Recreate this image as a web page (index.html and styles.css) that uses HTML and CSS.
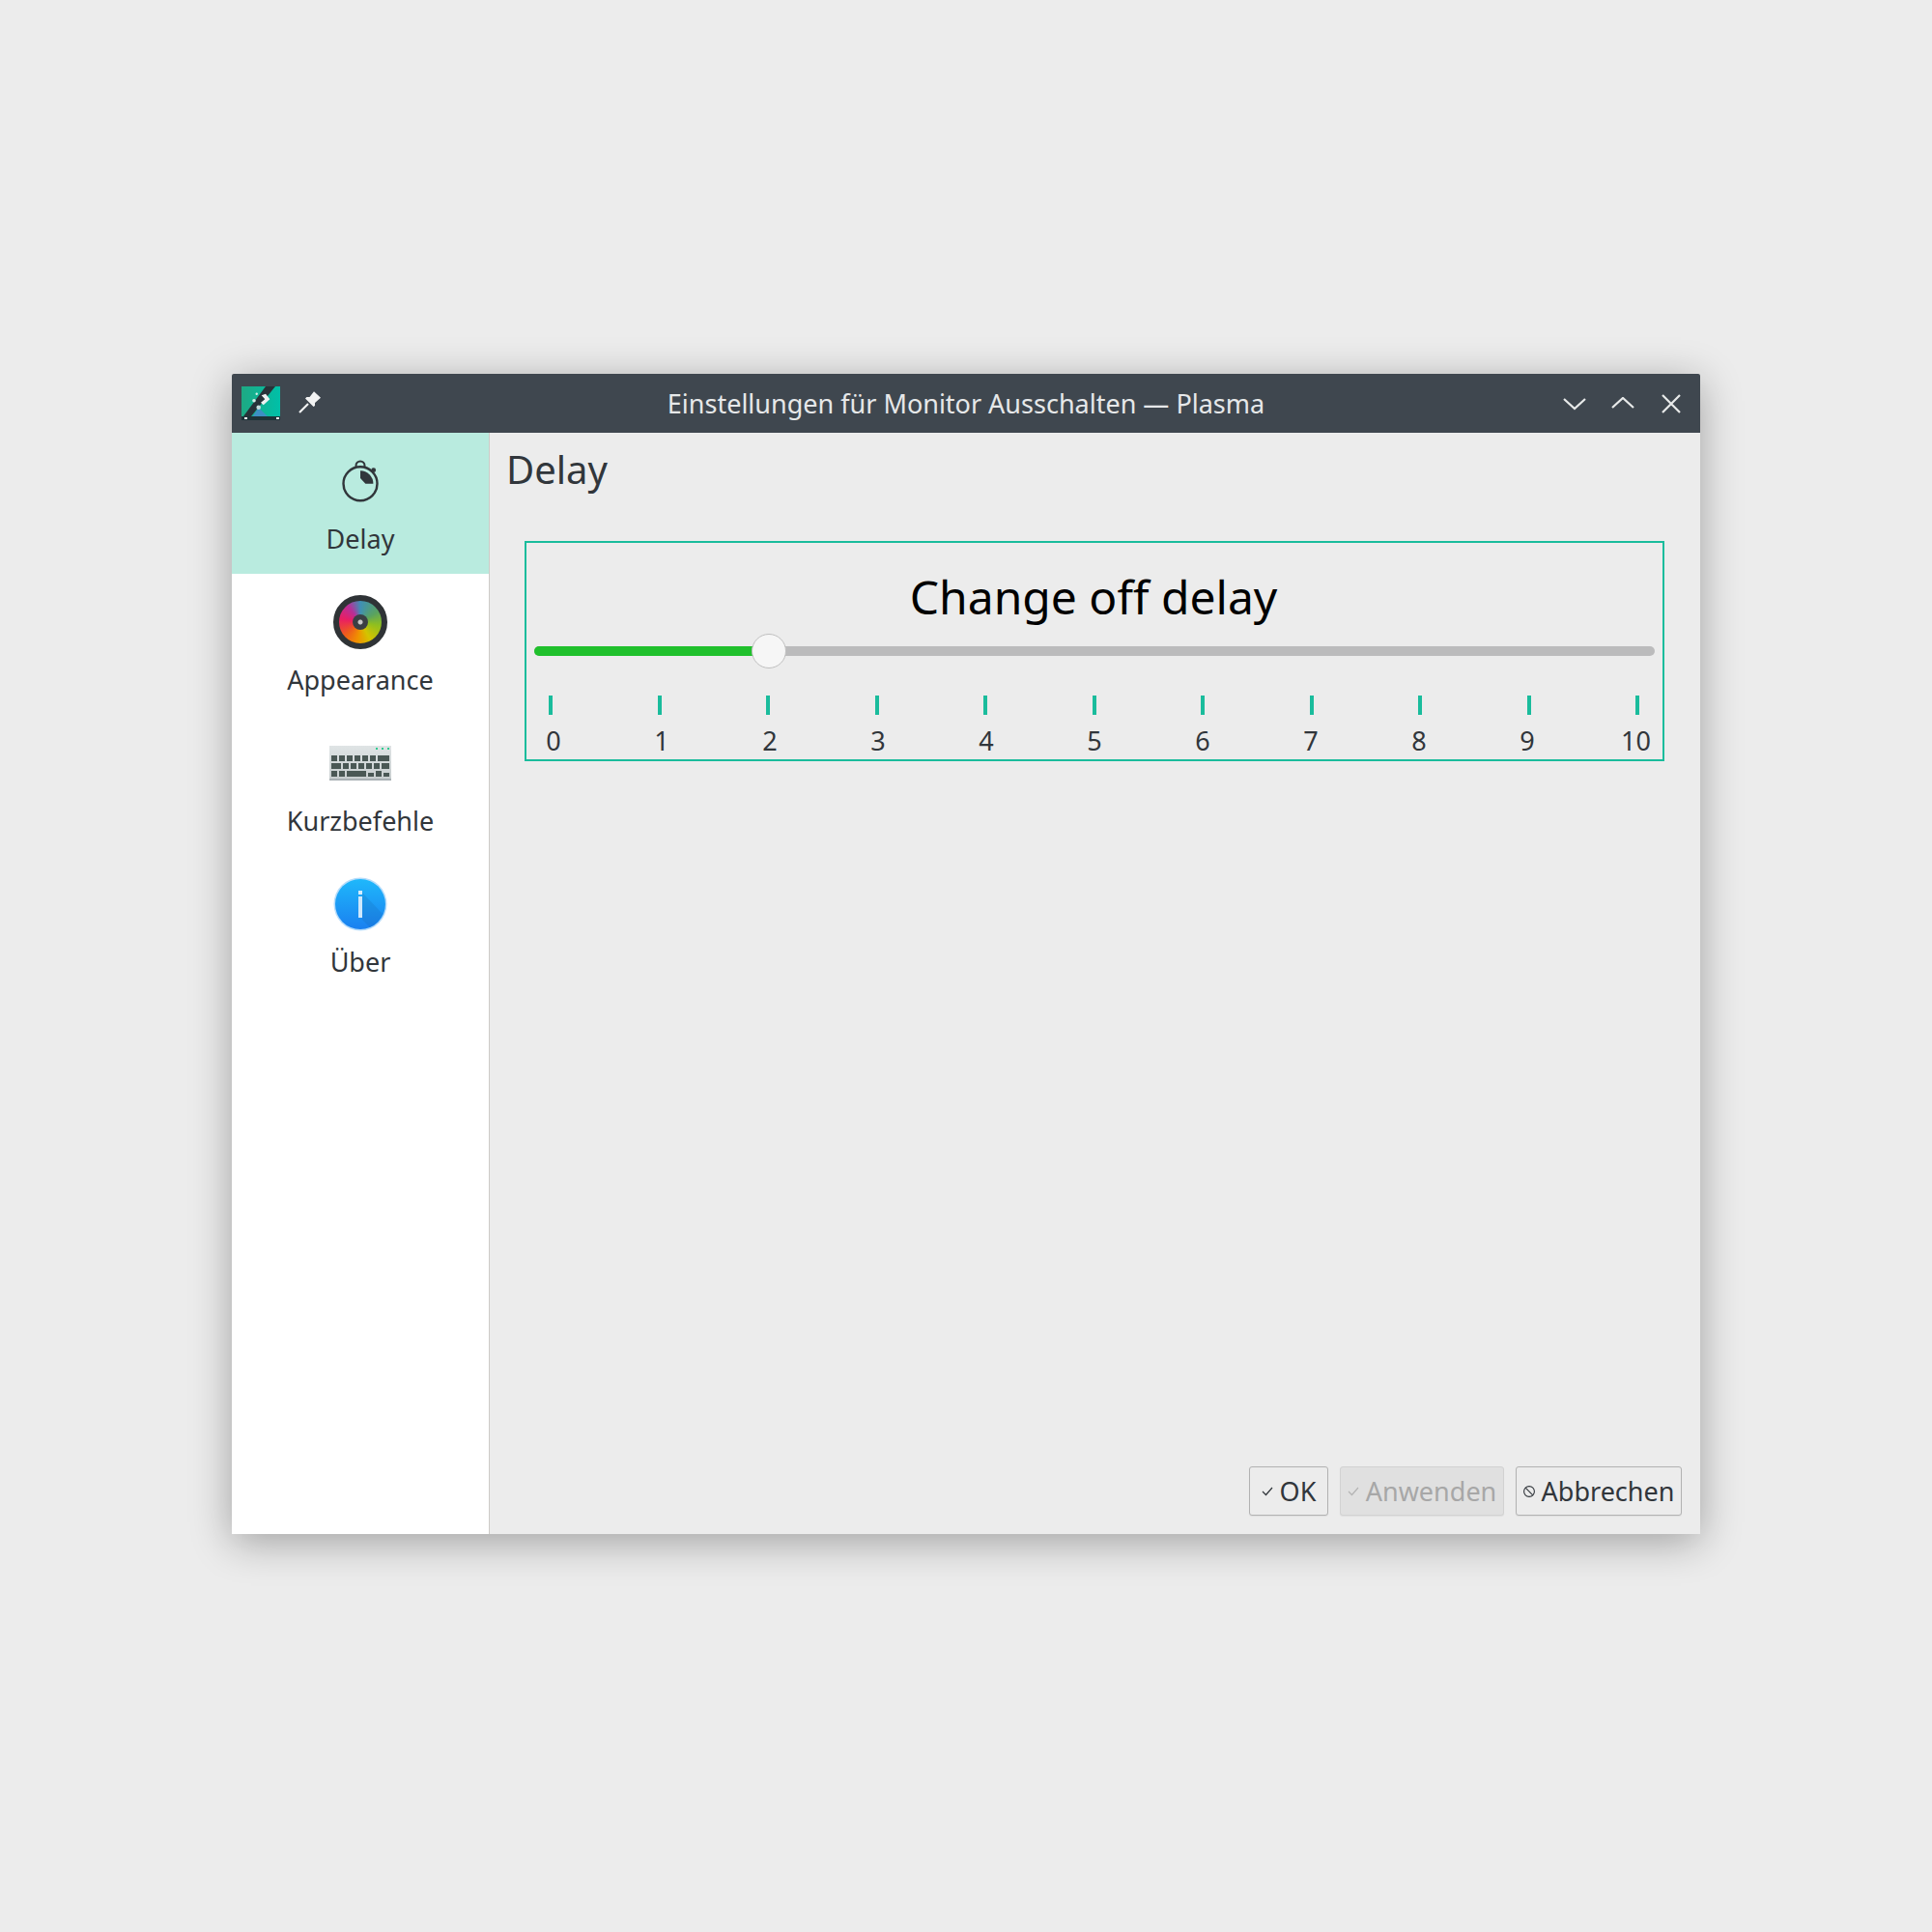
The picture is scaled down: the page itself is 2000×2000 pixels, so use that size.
FILE: index.html
```html
<!DOCTYPE html>
<html lang="de">
<head>
  <meta charset="UTF-8" />
  <title>Einstellungen für Monitor Ausschalten — Plasma</title>
  <link rel="stylesheet" href="styles.css">
</head>
<body>
  <div class="window">
    <!-- Title bar -->
    <header class="titlebar">
      <div class="title-left">
        <svg class="app-icon" width="40" height="35" viewBox="0 0 40 35">
          <defs>
            <linearGradient id="appbg" x1="0" y1="0" x2="1" y2="0">
              <stop offset="0" stop-color="#1ea983"/>
              <stop offset="1" stop-color="#00c0a8"/>
            </linearGradient>
          </defs>
          <rect width="40" height="31" fill="url(#appbg)"/>
          <polygon points="17.7,22 27,31 11.7,31" fill="#3d8fc4"/>
          <polygon points="25,0 35,0 10,31 2,31" fill="#283238"/>
          <rect y="31" width="40" height="4" fill="#1d3338"/>
          <polygon points="20.7,9.3 25,7.7 29.3,13.3 22.7,19.3 20,16.7 24.3,13.3" fill="#eef1f1"/>
          <circle cx="17.7" cy="21.7" r="2.3" fill="#c7dcdc"/>
          <circle cx="13" cy="14.7" r="1.8" fill="#d6efe8"/>
          <circle cx="15.7" cy="7.7" r="1.2" fill="#d6efe8"/>
          <rect x="3" y="32" width="3" height="2" fill="#eef1f1"/>
          <rect x="36" y="32" width="3" height="2" fill="#eef1f1"/>
        </svg>
        <svg class="pin-icon" width="24" height="24" viewBox="0 0 24 24">
          <polygon points="16,1.3 23,7.7 17,13 17,16 15.5,17 7,8.5 8.5,7 11.5,7" fill="#f2f3f3"/>
          <path d="M1 23 L10 14" stroke="#f2f3f3" stroke-width="2.2" fill="none"/>
        </svg>
      </div>
      <h1 class="title">Einstellungen für Monitor Ausschalten — Plasma</h1>
      <div class="title-btns">
        <svg width="24" height="14" viewBox="0 0 24 14"><path d="M1 2 L12 12 L23 2" class="win-stroke"/></svg>
        <svg width="24" height="14" viewBox="0 0 24 14"><path d="M1 11 L12 1 L23 11" class="win-stroke"/></svg>
        <svg width="20" height="20" viewBox="0 0 20 20"><path d="M1 1 L19 19 M19 1 L1 19" class="win-stroke"/></svg>
      </div>
    </header>

    <div class="body">
      <!-- Sidebar -->
      <nav class="sidebar">
        <a href="#" class="nav-item active">
          <span class="nav-icon">
            <svg width="48" height="56" viewBox="0 0 48 56">
              <circle cx="24" cy="30.7" r="17.5" fill="none" stroke="#31363b" stroke-width="2.4"/>
              <path d="M19.5 14 V12 A4.5 4.5 0 0 1 28.5 12 V14" fill="none" stroke="#31363b" stroke-width="2"/>
              <circle cx="37.7" cy="16.7" r="2.4" fill="#31363b"/>
              <path d="M24 17.3 A13.4 13.4 0 0 1 37.4 30.7 L29.3 30.7 L24 25 Z" fill="#31363b"/>
            </svg>
          </span>
          <span>Delay</span>
        </a>
        <a href="#" class="nav-item">
          <span class="nav-icon"><span class="wheel"><span class="wheel-hub"></span></span></span>
          <span>Appearance</span>
        </a>
        <a href="#" class="nav-item">
          <span class="nav-icon">
            <svg width="64" height="36" viewBox="0 0 64 36">
              <defs>
                <linearGradient id="kbd" x1="0" y1="0" x2="0" y2="1">
                  <stop offset="0" stop-color="#dfe4e5"/>
                  <stop offset="1" stop-color="#c6cccd"/>
                </linearGradient>
              </defs>
              <rect width="64" height="36" fill="url(#kbd)"/>
              <rect y="34" width="64" height="2" fill="#a9b1b4"/>
              <g fill="#2ecc8f">
                <rect x="48" y="2" width="2" height="2"/>
                <rect x="54" y="2" width="2" height="2"/>
                <rect x="60" y="2" width="2" height="2"/>
              </g>
              <g fill="#4a5855">
                <rect x="2" y="10" width="6" height="6"/>
                <rect x="10" y="10" width="6" height="6"/>
                <rect x="18" y="10" width="6" height="6"/>
                <rect x="26" y="10" width="6" height="6"/>
                <rect x="34" y="10" width="6" height="6"/>
                <rect x="42" y="10" width="6" height="6"/>
                <rect x="50" y="10" width="12" height="6"/>
                <rect x="2" y="18" width="10" height="6"/>
                <rect x="14" y="18" width="6" height="6"/>
                <rect x="22" y="18" width="6" height="6"/>
                <rect x="30" y="18" width="6" height="6"/>
                <rect x="38" y="18" width="6" height="6"/>
                <rect x="46" y="18" width="6" height="6"/>
                <rect x="54" y="18" width="8" height="6"/>
                <rect x="2" y="26" width="6" height="6"/>
                <rect x="10" y="26" width="6" height="6"/>
                <rect x="18" y="26" width="20" height="6"/>
                <rect x="40" y="28" width="6" height="4"/>
                <rect x="48" y="26" width="6" height="6"/>
                <rect x="56" y="28" width="6" height="4"/>
              </g>
            </svg>
          </span>
          <span>Kurzbefehle</span>
        </a>
        <a href="#" class="nav-item">
          <span class="nav-icon">
            <svg width="56" height="56" viewBox="0 0 56 56">
              <defs>
                <linearGradient id="info" x1="0" y1="0" x2="0" y2="1">
                  <stop offset="0" stop-color="#1fb8fb"/>
                  <stop offset="1" stop-color="#1a80f0"/>
                </linearGradient>
              </defs>
              <circle cx="28" cy="28" r="27.5" fill="#b5dcfb"/>
              <circle cx="28" cy="28" r="26" fill="url(#info)"/>
              <path d="M30 16 L51 38 A26 26 0 0 1 38 52 L30 44 Z" fill="#14609e" opacity="0.18"/>
              <rect x="26" y="14" width="4" height="4" fill="#d5ecfd"/>
              <rect x="26" y="20" width="4" height="22" fill="#cfe8fc"/>
            </svg>
          </span>
          <span>Über</span>
        </a>
      </nav>

      <!-- Main content -->
      <main class="main">
        <h2 class="page-title">Delay</h2>
        <section class="delay-box">
          <h3 class="delay-title">Change off delay</h3>
          <div class="slider">
            <div class="slider-fill"></div>
            <div class="slider-thumb"></div>
          </div>
          <div class="ticks">
            <i></i><i></i><i></i><i></i><i></i><i></i><i></i><i></i><i></i><i></i><i></i>
          </div>
          <div class="labels">
            <span>0</span>
            <span>1</span>
            <span>2</span>
            <span>3</span>
            <span>4</span>
            <span>5</span>
            <span>6</span>
            <span>7</span>
            <span>8</span>
            <span>9</span>
            <span>10</span>
          </div>
        </section>

        <div class="buttons">
          <button class="btn btn-ok">
            <svg width="12" height="10" viewBox="0 0 12 10"><path d="M1 5 L4.5 8.5 L11 1" fill="none" stroke="#31363b" stroke-width="1.2"/></svg>
            OK
          </button>
          <button class="btn btn-apply" disabled>
            <svg width="12" height="10" viewBox="0 0 12 10"><path d="M1 5 L4.5 8.5 L11 1" fill="none" stroke="#b4b4b4" stroke-width="1.2"/></svg>
            Anwenden
          </button>
          <button class="btn btn-cancel">
            <svg width="12" height="12" viewBox="0 0 12 12"><circle cx="6" cy="6" r="5.4" fill="none" stroke="#31363b" stroke-width="1.1"/><path d="M2.2 2.2 L9.8 9.8" stroke="#31363b" stroke-width="1.1"/></svg>
            Abbrechen
          </button>
        </div>
      </main>
    </div>
  </div>
</body>
</html>
```

FILE: styles.css
```css
/* Reset Styles */
* {
  margin: 0;
  padding: 0;
  box-sizing: border-box;
}

body {
  width: 2000px;
  height: 2000px;
  padding: 387px 240px 0;
  font-family: "Noto Sans", sans-serif;
  background-color: #ececec;
  color: #31363b;
}

.window {
  display: flex;
  flex-direction: column;
  width: 1520px;
  height: 1201px;
  background-color: #ececec;
  box-shadow: 0 8px 40px rgba(0, 0, 0, 0.32);
}

/* Title bar */
.titlebar {
  display: grid;
  grid-template-columns: 1fr auto 1fr;
  align-items: center;
  height: 61px;
  padding: 0 20px;
  background-color: #3f474f;
  border-radius: 2px 2px 0 0;
}

.title-left {
  display: flex;
  align-items: center;
  gap: 19px;
  margin-left: -10px;
}

.pin-icon {
  margin-bottom: 3px;
}

.title {
  font-size: 27px;
  font-weight: 400;
  color: #e6e8e9;
}

.title-btns {
  display: flex;
  align-items: center;
  justify-content: flex-end;
  gap: 26px;
}

.title-btns svg:last-child {
  margin-left: 2px;
}

.win-stroke {
  fill: none;
  stroke: #e8eaea;
  stroke-width: 2.2;
}

/* Body */
.body {
  flex: 1;
  display: flex;
  min-height: 0;
}

/* Sidebar */
.sidebar {
  width: 267px;
  background-color: #fff;
  border-right: 1px solid #cdcbc7;
}

.nav-item {
  display: flex;
  flex-direction: column;
  align-items: center;
  height: 146px;
  padding-top: 22px;
  font-size: 27px;
  line-height: 37px;
  color: #31363b;
  text-decoration: none;
}

.nav-item.active {
  background-color: #b9ebdf;
}

.nav-icon {
  display: flex;
  align-items: center;
  justify-content: center;
  height: 56px;
  margin-bottom: 13px;
}

/* Colour wheel, drawn with a gradient */
.wheel {
  display: flex;
  align-items: center;
  justify-content: center;
  width: 56px;
  height: 56px;
  border: 6px solid #2f3336;
  border-radius: 50%;
  background: conic-gradient(#3f8fb5, #5aa35f 60deg, #8fbf1f 100deg, #d4c400 150deg, #f09000 190deg, #ee5c1c 230deg, #e91e63 280deg, #b5309a 325deg, #3f8fb5);
}

.wheel-hub {
  width: 16px;
  height: 16px;
  border-radius: 50%;
  background: radial-gradient(#c8c8c8 0 2px, #3a3f44 3px);
}

/* Main Content */
.main {
  flex: 1;
  display: flex;
  flex-direction: column;
  padding: 10px 37px 19px 17px;
}

.page-title {
  font-size: 40px;
  font-weight: 400;
  line-height: 56px;
  color: #31363b;
}

.delay-box {
  height: 228px;
  margin: 46px 0 0 19px;
  border: 2px solid #1abc9c;
}

.delay-title {
  margin-top: 23px;
  padding-right: 2px;
  font-size: 48px;
  font-weight: 400;
  line-height: 66px;
  text-align: center;
  color: #000;
}

/* Slider */
.slider {
  position: relative;
  height: 10px;
  margin: 18px 8px 0;
  background-color: #bbbbbc;
  border-radius: 5px;
}

.slider-fill {
  width: 243px;
  height: 10px;
  background-color: #20c02c;
  border-radius: 5px 0 0 5px;
}

.slider-thumb {
  position: absolute;
  left: 225px;
  top: -13px;
  width: 36px;
  height: 36px;
  background-color: #f6f6f6;
  border: 1px solid #bfbfbf;
  border-radius: 50%;
}

/* Scale */
.ticks {
  display: flex;
  justify-content: space-between;
  margin-top: 41px;
  padding: 0 24px 0 23px;
}

.ticks i {
  display: block;
  width: 4px;
  height: 20px;
  background-color: #1abc9c;
}

.labels {
  display: flex;
  justify-content: space-between;
  margin-top: 8px;
  padding: 0 13px;
  font-size: 27px;
  line-height: 37px;
}

.labels span {
  width: 30px;
  text-align: center;
}

/* Buttons */
.buttons {
  display: flex;
  justify-content: flex-end;
  gap: 12px;
  margin-top: auto;
  margin-right: -18px;
}

.btn {
  display: flex;
  align-items: center;
  justify-content: center;
  gap: 7px;
  height: 51px;
  padding-bottom: 1px;
  font-family: inherit;
  font-size: 27px;
  color: #31363b;
  background-color: #ececec;
  border: 1px solid #b2b2b2;
  border-radius: 3px;
  box-shadow: 0 1px 1px rgba(0, 0, 0, 0.06);
}

.btn svg {
  margin-top: 1px;
}

.btn-ok {
  width: 82px;
}

.btn-apply {
  width: 170px;
  color: #a7a7a7;
  background-color: #e0e0e0;
  border-color: #d2d2d2;
}

.btn-cancel {
  width: 172px;
}
```
